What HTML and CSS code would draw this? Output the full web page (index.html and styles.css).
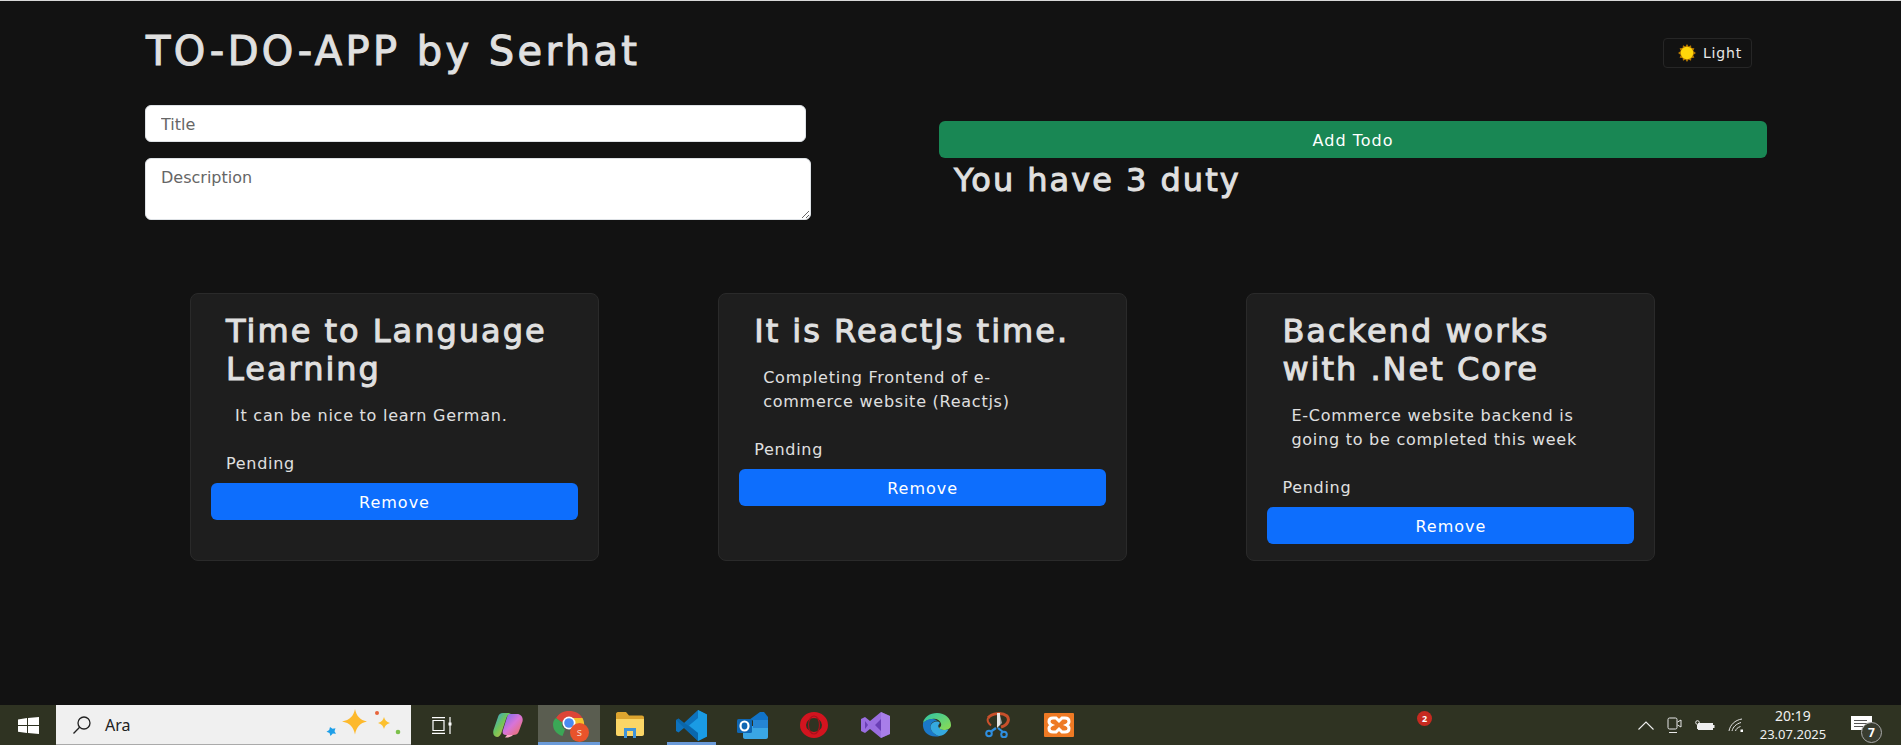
FILE: index.html
```html
<!DOCTYPE html>
<html>
<head>
    <meta charset="utf-8">
    <title>TO-DO-APP</title>
    <link rel="stylesheet" href="styles.css">
</head>
<body>
<div class="screen">
    <div class="page">
        <div class="top-row">
            <h1 class="app-title">TO-DO-APP by Serhat</h1>
            <button class="theme-btn">
                <svg class="sun" width="18" height="18" viewBox="0 0 18 18">
                    <polygon fill="#b87a00" points="9,0 10.6,2.6 13,1.2 13.4,4 16.4,4.2 15.2,7 18,9 15.2,11 16.4,13.8 13.4,14 13,16.8 10.6,15.4 9,18 7.4,15.4 5,16.8 4.6,14 1.6,13.8 2.8,11 0,9 2.8,7 1.6,4.2 4.6,4 5,1.2 7.4,2.6"/>
                    <circle cx="9" cy="9" r="6.2" fill="#ffd60a"/>
                </svg>
                <span>Light</span>
            </button>
        </div>

        <div class="form-row">
            <div class="form-left">
                <input class="field field-title" type="text" placeholder="Title">
                <textarea class="field field-desc" placeholder="Description"></textarea>
            </div>
            <div class="form-right">
                <button class="btn btn-add">Add Todo</button>
                <h2 class="count">You have 3 duty</h2>
            </div>
        </div>

        <div class="cards">
            <div class="card">
                <h2 class="card-title">Time to Language<br>Learning</h2>
                <p class="card-desc">It can be nice to learn German.</p>
                <p class="card-status">Pending</p>
                <button class="btn btn-remove">Remove</button>
            </div>
            <div class="card">
                <h2 class="card-title">It is ReactJs time.</h2>
                <p class="card-desc">Completing Frontend of e-<br>commerce website (Reactjs)</p>
                <p class="card-status">Pending</p>
                <button class="btn btn-remove">Remove</button>
            </div>
            <div class="card">
                <h2 class="card-title">Backend works<br>with .Net Core</h2>
                <p class="card-desc">E-Commerce website backend is<br>going to be completed this week</p>
                <p class="card-status">Pending</p>
                <button class="btn btn-remove">Remove</button>
            </div>
        </div>
    </div>

    <div class="taskbar">
        <div class="start">
            <svg width="21" height="17" viewBox="0 0 21 17">
                <path fill="#fff" d="M0 2.4 9 1v7H0zM10 .9 21 0v8H10zM0 9h9v7L0 14.700zM10 9h11v8l-11-1z"/>
            </svg>
        </div>
        <div class="search">
            <svg width="20" height="20" viewBox="0 0 20 20" fill="none" stroke="#222" stroke-width="1.3">
                <circle cx="12" cy="8" r="6"/>
                <path d="M7.600 12.200 1.500 18.500"/>
            </svg>
            <span class="search-text">Ara</span>
            <svg class="sparkles" width="76" height="34" viewBox="0 0 76 34">
                <path fill="#fdb92c" d="M30 1c1.500 7 5 11 12 12.500-7 1.500-10.500 5.500-12 13-1.500-7.500-5-11.500-13-13 8-1.500 11.500-5.500 13-12.500z"/>
                <path fill="#fcc02e" d="M59 9c.7 3 2.400 5 6 6-3.600 1-5.300 3-6 6-.7-3-2.400-5-6-6 3.600-1 5.300-3 6-6z"/>
                <path fill="#1f9fe8" d="M5 19l2.500 1.800 3-.6-1 3 1.500 2.600-3.200-.2L5.500 28 4.500 25 1.500 23.700l2.700-1.700z"/>
                <circle cx="52" cy="5" r="2" fill="#e8643a"/>
                <circle cx="73" cy="24" r="2.300" fill="#7cc04b"/>
            </svg>
        </div>
        <div class="task-icons">
            <div class="task task-first">
                <svg width="22" height="17" viewBox="0 0 22 17" fill="none" stroke="#fff" stroke-width="1.200">
                    <path d="M1 .600h13M1 16.400h13M2 3.500h11v10H2zM19 0v17"/>
                    <rect x="17.500" y="5.500" width="3" height="3" fill="#fff" stroke="none"/>
                </svg>
            </div>
            <div class="task">
                <svg width="30" height="26" viewBox="0 0 30 26">
                    <defs>
                        <linearGradient id="cop1" x1="0" y1="0" x2="1" y2="1">
                            <stop offset="0" stop-color="#2f9fe8"/><stop offset=".45" stop-color="#6fc45a"/><stop offset="1" stop-color="#f5b93d"/>
                        </linearGradient>
                        <linearGradient id="cop2" x1="0" y1="0" x2="1" y2="1">
                            <stop offset="0" stop-color="#6d6cf0"/><stop offset=".5" stop-color="#d874d8"/><stop offset="1" stop-color="#f0705a"/>
                        </linearGradient>
                    </defs>
                    <path fill="url(#cop2)" d="M15 2h9c4 0 6.500 3.500 5.500 7.500L26 19c-1 3-3 4-6 4h-7c-3 0-4-2-3-5z"/>
                    <path fill="url(#cop1)" d="M10 1h8c-3 1-4 3-5 6l-4 12c-1 4-3 6-5 6-3 0-4.500-3-3.500-7L5 5c.7-2.500 2.500-4 5-4z"/>
                    <path fill="#f9a9c8" d="M14 23h6c-2 2-4 2.500-8 2.500z"/>
                </svg>
            </div>
            <div class="task task-active">
                <div class="chrome">
                    <svg width="32" height="26" viewBox="0 0 32 26">
                        <path fill="#dc4437" d="M3 7C6 2.500 10 0 16 0s11 2.500 13.500 7H16c-3 0-6 1.500-7 4.500z"/>
                        <path fill="#f5c02c" d="M29.500 7c1.600 3 2 6 1.500 9l-10-1c1-3 .5-5.500-1.500-8z"/>
                        <path fill="#3ba756" d="M3 7l6 4.500c-.5 3 .5 5 3 7L9.500 25C3 23 0 18.500 0 13c0-2 1-4.500 3-6z"/>
                        <circle cx="16" cy="12" r="6.500" fill="#fff"/>
                        <circle cx="16" cy="12" r="4.800" fill="#4a8af0"/>
                    </svg>
                    <span class="chrome-badge">s</span>
                </div>
            </div>
            <div class="task">
                <svg width="28" height="26" viewBox="0 0 28 26">
                    <path fill="#dda52f" d="M0 2c0-1 .6-2 2-2h8l3 3.500h13c1 0 2 .8 2 2V10H0z"/>
                    <path fill="#fbd666" d="M0 7h28v15c0 1.200-.8 2-2 2H2c-1.200 0-2-.8-2-2z"/>
                    <path fill="#3f93d8" d="M8 16h12v10h-3v-7h-6v7H8z"/>
                </svg>
            </div>
            <div class="task task-open">
                <svg width="31" height="31" viewBox="0 0 31 31">
                    <path fill="#0d72bd" d="M22 0 31 4.500v22L22 31 8 18 2.500 22.500 0 21V10l2.500-1.500L8 13z"/>
                    <path fill="#1a9be4" d="M22 0l9 4.500v22L22 31zM22 8l-9 7.500 9 7.500z" fill-rule="evenodd"/>
                    <path fill="#0a5f9e" d="M2.500 8.500 22 23v8L0 10z" opacity=".55"/>
                </svg>
            </div>
            <div class="task">
                <svg width="31" height="27" viewBox="0 0 31 27">
                    <path fill="#1173c8" d="M12 8 23 0c2-1 3-1 4 0l4 5v5z"/>
                    <path fill="#3aa6e4" d="M6 14h25v11c0 1-1 2-2 2H8c-1 0-2-1-2-2z"/>
                    <path fill="#2585d3" d="M16 8h15v8H16z"/>
                    <rect x="0" y="7" width="15" height="14" rx="1.500" fill="#0f66b3"/>
                    <ellipse cx="7.500" cy="14" rx="4" ry="4.500" fill="none" stroke="#fff" stroke-width="2.200"/>
                </svg>
            </div>
            <div class="task">
                <svg width="28" height="26" viewBox="0 0 28 26">
                    <ellipse cx="14" cy="13" rx="11" ry="10" fill="none" stroke="#d3141f" stroke-width="6"/>
                    <ellipse cx="14" cy="13" rx="5.500" ry="9" fill="none" stroke="#a80f1a" stroke-width="1.200"/>
                </svg>
            </div>
            <div class="task">
                <svg width="29" height="26" viewBox="0 0 29 26">
                    <path fill="#9a6ee0" d="M20 0 29 4v18l-9 4-11-9-5 4-4-2V7l4-2 5 4z"/>
                    <path fill="#6a3fb5" d="M20 7l-6 6 6 6zM4 9v8l3-4z"/>
                    <path fill="#b58cf0" d="M20 0l9 4v18l-9 4z" opacity=".55"/>
                </svg>
            </div>
            <div class="task">
                <svg width="29" height="25" viewBox="0 0 29 25">
                    <defs>
                        <linearGradient id="edgeA" x1="0" y1="0" x2="1" y2="1">
                            <stop offset="0" stop-color="#2cc4a8"/><stop offset="1" stop-color="#8fdc4f"/>
                        </linearGradient>
                    </defs>
                    <path fill="url(#edgeA)" d="M1 10C2 4 8 0 15 0c8 0 14 5 14 12 0 3.500-3 5-7 5-3 0-5-1-5-2 2-1 2.500-3 2-4.500C18 7 14 5 10 6c-4 .7-7 2-9 4z"/>
                    <path fill="#1a78c8" d="M1 10c2-2.500 6-4.500 10-4 2 .3 3.500 1 4.500 1.800-4 0-7 2.500-7 6 0 4.500 4 8 9 9.200-1 .5-2 .5-3 .5C6 24 0 18 1 10z"/>
                    <path fill="#35a9e0" d="M8.500 14C8.500 11 11 8.500 15 8.500c2.500 0 3.500 1.300 2 2.700-1 .8-1 2.500 0 3.800 2 2.200 6 2.500 9.500 1.300-2 4.200-6 6.700-9.500 6.700C13 21.800 8.500 18.300 8.500 14z"/>
                </svg>
            </div>
            <div class="task">
                <svg width="26" height="26" viewBox="0 0 26 26">
                    <path fill="none" stroke="#c9502b" stroke-width="3" d="M3 6C7 1 17 0 22 4c3 3.500 1 9-6 11"/>
                    <path fill="none" stroke="#c9502b" stroke-width="2" d="M3 6c-1 2.500 0 5 3 7.500"/>
                    <path fill="#e6e6e6" d="M12 1h3v12l-3 3z"/>
                    <path fill="#a8a8a8" d="M15 3l2 8-2 2z"/>
                    <path fill="none" stroke="#2f8fe0" stroke-width="2.200" d="M11 16 6 19.500M13 16l5 4"/>
                    <circle cx="4" cy="21.500" r="2.800" fill="none" stroke="#2f8fe0" stroke-width="2"/>
                    <circle cx="19" cy="22.500" r="2.800" fill="none" stroke="#2f8fe0" stroke-width="2"/>
                </svg>
            </div>
            <div class="task">
                <svg width="30" height="24" viewBox="0 0 30 24">
                    <rect width="30" height="24" rx="1" fill="#ee7a24"/>
                    <path fill="none" stroke="#fff" stroke-width="3" d="M9 5h3l3 3 3-3h3c2.500 0 4 1.500 4 3.500 0 1.500-1 2.800-2.500 3.500 1.500.7 2.500 2 2.500 3.500 0 2-1.500 3.500-4 3.500h-3l-3-3-3 3H9c-2.500 0-4-1.500-4-3.500 0-1.500 1-2.800 2.500-3.500C6 11.300 5 10 5 8.500 5 6.500 6.500 5 9 5z"/>
                </svg>
            </div>
        </div>
        <div class="tray-alert">
            <span class="alert-dot">2</span>
        </div>
        <div class="tray">
            <svg class="tray-icon" width="16" height="9" viewBox="0 0 16 9" fill="none" stroke="#f0f0f0" stroke-width="1.100">
                <path d="M.500 8.500 8 1l7.500 7.500"/>
            </svg>
            <svg class="tray-icon" width="15" height="18" viewBox="0 0 15 18" fill="none" stroke="#e8e8e8" stroke-width="1">
                <rect x="1" y="2" width="9" height="11" rx="1.500"/>
                <path d="M10.500 6 14 4v7l-3.500-2M2 16.500h8"/>
            </svg>
            <svg class="tray-icon" width="20" height="11" viewBox="0 0 20 11">
                <circle cx="2.500" cy="2.500" r="1.800" fill="none" stroke="#eee"/>
                <path d="M2.500 4.500V9" stroke="#eee"/>
                <rect x="3" y="3" width="15" height="7" fill="#eee"/>
                <rect x="18" y="5" width="1.500" height="3" fill="#eee"/>
            </svg>
            <svg class="tray-icon" width="16" height="14" viewBox="0 0 16 14" fill="none" stroke="#e4e4e4">
                <path d="M1 13C2 7 7 2 14 1M4 13c1-4 4-7 9-8.500M7.500 13c.5-2 2-3.500 5-4.500"/>
                <rect x="12.500" y="11.500" width="2.500" height="2.500" fill="#fff" stroke="none"/>
            </svg>
        </div>
        <div class="clock">
            <span class="clock-time">20:19</span>
            <span class="clock-date">23.07.2025</span>
        </div>
        <div class="notify">
            <svg class="notify-msg" width="21" height="15" viewBox="0 0 21 15">
                <rect width="21" height="14" fill="#fff"/>
                <path d="M3 4.500h13M3 7.500h13M3 10.500h9" stroke="#555" stroke-width="1"/>
            </svg>
            <span class="notify-badge">7</span>
        </div>
    </div>
</div>
</body>
</html>
```

FILE: styles.css
```css
* { box-sizing: border-box; }
html, body { margin: 0; height: 100%; overflow: hidden; }
body { background: #121212; color: #e0e0e0; font-family: "DejaVu Sans", "Noto Sans", sans-serif; }

.screen { height: 745px; display: flex; flex-direction: column; border-top: 1px solid #d8d8d8; }
.page { flex: 1; }

/* top */
.top-row { display: flex; justify-content: space-between; align-items: flex-start; padding: 26px 149px 0 146px; height: 104px; }
.app-title { margin: 0; font-size: 40px; line-height: 48px; font-weight: 500; letter-spacing: 3.4px; -webkit-text-stroke: 1px #e0e0e0; }
.theme-btn { display: flex; align-items: center; gap: 7px; height: 30px; width: 89px; margin-top: 11px; padding: 0 0 0 14px; background: #121212; border: 1px solid #262626; border-radius: 4px; color: #e8e8e8; font: 14px "DejaVu Sans", sans-serif; letter-spacing: .8px; }
.sun { flex: none; }

/* form */
.form-row { display: flex; padding-left: 145px; }
.form-left { width: 666px; display: flex; flex-direction: column; gap: 16px; }
.field { display: block; padding: 7px 15px 5px; background: #fff; border: 1px solid #dee2e6; border-radius: 6px; font: 16px/24px "DejaVu Sans", sans-serif; color: #222; outline: none; }
.field::placeholder { color: #666; }
.field-title { width: 661px; height: 37px; }
.field-desc { width: 666px; height: 62px; }
.form-right { width: 828px; margin: 16px 0 0 128px; }
.btn { display: block; width: 100%; border: 0; border-radius: 6px; color: #fff; font: 16px "DejaVu Sans", sans-serif; letter-spacing: 1px; padding-top: 2px; }
.btn-add { height: 37px; background: #198754; }
.count { margin: 3px 0 0 15px; font-size: 32px; line-height: 38px; font-weight: 500; letter-spacing: 2px; -webkit-text-stroke: 1px #e0e0e0; }

/* cards */
.cards { display: flex; gap: 119.200px; padding-left: 190px; margin-top: 73px; }
.card { width: 409px; height: 268px; padding: 18px 20px 0; background: #1e1e1e; border: 1px solid #2a2a2a; border-radius: 8px; }
.card-title { margin: 0 0 16px 15px; font-size: 32px; line-height: 38px; font-weight: 500; letter-spacing: 2px; -webkit-text-stroke: 1px #e0e0e0; }
.card-desc { margin: 0 0 24px 24px; font-size: 16px; line-height: 24px; letter-spacing: .75px; }
.card-status { margin: 0 0 7px 15px; font-size: 16px; line-height: 24px; letter-spacing: .7px; }
.btn-remove { height: 37px; background: #0d6efd; }

/* windows taskbar */
.taskbar { height: 40px; flex: none; display: flex; align-items: stretch; background: #2f3322; color: #f0f0f0; font-family: "Noto Sans", sans-serif; }
.start { flex: none; width: 56px; display: flex; align-items: center; justify-content: center; }
.search { flex: none; width: 355px; display: flex; align-items: center; padding-left: 16px; background: #f0f0f0; border-bottom: 1px solid #aaa; color: #222; }
.search-text { margin-left: 13px; font-size: 16px; }
.sparkles { margin-left: auto; margin-right: 10px; }
.task-icons { flex: none; display: flex; }
.task { flex: none; width: 61.300px; display: flex; align-items: center; justify-content: center; }
.task-first { width: 66px; padding-right: 5px; }
.task-active { background: #5a5d50; border-bottom: 3px solid #6a9ad8; }
.task-open { position: relative; }
.task-open::after { content: ""; position: absolute; left: 6px; right: 6px; bottom: 0; height: 3px; background: #6a9ad8; }
.chrome { position: relative; display: flex; }
.chrome-badge { position: absolute; right: -4px; bottom: -5px; width: 19px; height: 19px; border-radius: 50%; background: #e8532b; color: #f7d0c0; font-size: 11px; line-height: 18px; text-align: center; }
.tray-alert { flex: none; width: 548px; padding: 6px 0 0 327px; }
.alert-dot { display: block; width: 15px; height: 15px; border-radius: 50%; background: #c62a20; color: #fff; font-size: 9px; font-weight: 700; line-height: 15px; text-align: center; }
.tray { flex: none; display: flex; align-items: center; gap: 13px; }
.clock { flex: none; width: 78px; margin-left: 10px; display: flex; flex-direction: column; align-items: center; justify-content: center; font-size: 13px; line-height: 18px; }
.clock-time { font-size: 14px; }
.notify { flex: none; position: relative; width: 50px; margin-left: 19px; padding-top: 11px; }
.notify-msg { display: block; }
.notify-badge { position: absolute; left: 10px; top: 17px; width: 21px; height: 21px; border-radius: 50%; background: #3a3d30; border: 1px solid #aaa; color: #fff; font-size: 12px; font-weight: 700; line-height: 19px; text-align: center; }
```
